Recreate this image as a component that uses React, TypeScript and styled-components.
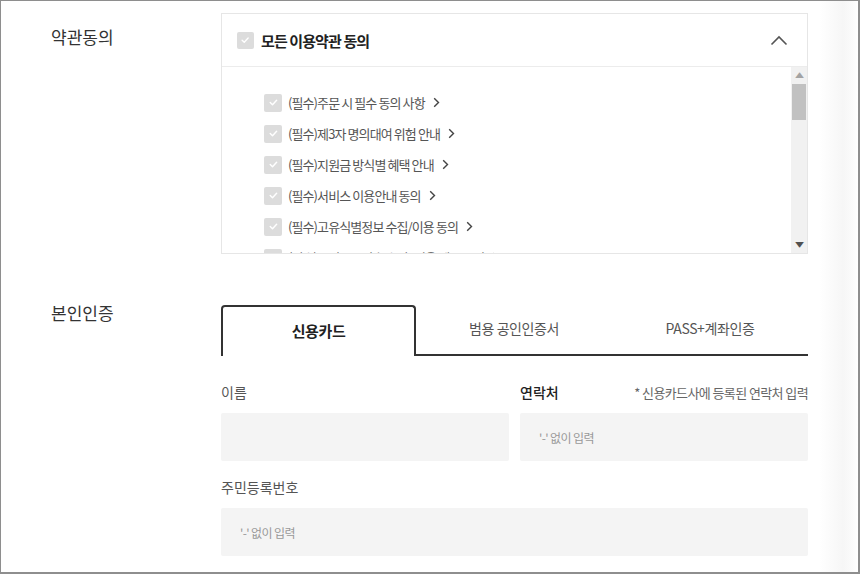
import styled, { createGlobalStyle } from "styled-components";

const GlobalStyle = createGlobalStyle`
    html, body {
        margin: 0;
        padding: 0;
        background: #ffffff;
    }
    * {
        box-sizing: border-box;
    }
    body {
        font-family: "Noto Sans CJK KR", "Noto Sans", sans-serif;
        color: #333;
    }
`

const terms = [
    "(필수)주문 시 필수 동의 사항",
    "(필수)제3자 명의대여 위험 안내",
    "(필수)지원금 방식별 혜택 안내",
    "(필수)서비스 이용안내 동의",
    "(필수)고유식별정보 수집/이용 동의",
    "(필수)주민등록번호 수집·이용 제공 동의",
]

const tabs = ["신용카드", "범용 공인인증서", "PASS+계좌인증"]

function Check({ size }: { size: number }) {
    return (
        <CheckBox $size={size}>
            <svg width={size * 0.6} height={size * 0.6} viewBox="0 0 12 12" fill="none">
                <path d="M2.5 6.2 L5 8.6 L9.6 3.6" stroke="#ffffff" strokeWidth="1.6" strokeLinecap="round" strokeLinejoin="round" />
            </svg>
        </CheckBox>
    )
}

export default function App() {
    return (
        <>
            <GlobalStyle />
            <Frame>
                <Section>
                    <SectionLabel $top={12}>약관동의</SectionLabel>
                    <TermsBox>
                        <TermsHeader>
                            <Check size={17} />
                            <AllTitle>모든 이용약관 동의</AllTitle>
                            <svg width="18" height="11" viewBox="0 0 18 11" fill="none" style={{ marginLeft: "auto" }}>
                                <path d="M1.5 9.5 L9 2 L16.5 9.5" stroke="#555" strokeWidth="1.6" />
                            </svg>
                        </TermsHeader>
                        <TermsBody>
                            <TermsList>
                                {terms.map((t) => (
                                    <TermRow key={t}>
                                        <Check size={18} />
                                        <TermText>{t}</TermText>
                                        <svg width="7" height="11" viewBox="0 0 7 11" fill="none">
                                            <path d="M1.2 1.2 L5.5 5.5 L1.2 9.8" stroke="#444" strokeWidth="1.4" />
                                        </svg>
                                    </TermRow>
                                ))}
                            </TermsList>
                            <ScrollTrack>
                                <ScrollArrow $dark={false}>▲</ScrollArrow>
                                <ScrollThumb />
                                <ScrollArrow $dark style={{ marginTop: "auto" }}>▼</ScrollArrow>
                            </ScrollTrack>
                        </TermsBody>
                    </TermsBox>
                </Section>

                <Section $gap={51}>
                    <SectionLabel $top={-4}>본인인증</SectionLabel>
                    <div>
                        <TabBar>
                            {tabs.map((t, i) => (
                                <Tab key={t} $active={i === 0}>{t}</Tab>
                            ))}
                        </TabBar>
                        <FieldGrid>
                            <Field>
                                <FieldHead>
                                    <FieldLabel>이름</FieldLabel>
                                </FieldHead>
                                <Input />
                            </Field>
                            <Field>
                                <FieldHead>
                                    <FieldLabel $strong>연락처</FieldLabel>
                                    <Note>* 신용카드사에 등록된 연락처 입력</Note>
                                </FieldHead>
                                <Input>'-' 없이 입력</Input>
                            </Field>
                            <Field $wide>
                                <FieldHead>
                                    <FieldLabel>주민등록번호</FieldLabel>
                                </FieldHead>
                                <Input>'-' 없이 입력</Input>
                            </Field>
                        </FieldGrid>
                    </div>
                </Section>
            </Frame>
        </>
    )
}

const Frame = styled.div`
    width: 860px;
    height: 574px;
    border: 1px solid #8e8e8e;
    border-right-width: 2px;
    border-bottom-width: 2px;
    padding-top: 12px;
    overflow: hidden;
    background: linear-gradient(to right, #fff 0, #fff 818px, #f6f6f6 842px, #fbfbfb 852px, #fff 857px);
`

const Section = styled.div<{ $gap?: number }>`
    display: grid;
    grid-template-columns: 220px 587px;
    margin-top: ${(p) => p.$gap ?? 0}px;
`

const SectionLabel = styled.div<{ $top: number }>`
    margin-top: ${(p) => p.$top}px;
    padding-left: 50px;
    font-size: 17px;
    line-height: 24px;
    color: #333;
`

const TermsBox = styled.div`
    border: 1px solid #e6e6e6;
    height: 241px;
    display: flex;
    flex-direction: column;
    background: #fff;
`

const TermsHeader = styled.div`
    height: 53px;
    flex-shrink: 0;
    display: flex;
    align-items: center;
    padding: 0 19px 0 15px;
    border-bottom: 1px solid #ececec;
`

const AllTitle = styled.span`
    margin-left: 7px;
    font-size: 15px;
    font-weight: 700;
    color: #222;
    letter-spacing: -0.9px;
`

const CheckBox = styled.span<{ $size: number }>`
    width: ${(p) => p.$size}px;
    height: ${(p) => p.$size}px;
    border-radius: 2px;
    background: #dcdcdc;
    display: inline-flex;
    align-items: center;
    justify-content: center;
    flex-shrink: 0;
`

const TermsBody = styled.div`
    flex: 1;
    display: flex;
    min-height: 0;
`

const TermsList = styled.div`
    flex: 1;
    overflow: hidden;
    padding: 20px 0 0 42px;
`

const TermRow = styled.div`
    height: 31px;
    display: flex;
    align-items: center;
`

const TermText = styled.span`
    margin: 0 8px 0 6px;
    font-size: 13px;
    color: #555;
    letter-spacing: -0.9px;
`

const ScrollTrack = styled.div`
    width: 16px;
    background: #f1f1f1;
    display: flex;
    flex-direction: column;
    align-items: center;
    padding: 3px 0 4px;
`

const ScrollArrow = styled.span<{ $dark: boolean }>`
    font-size: 7px;
    line-height: 10px;
    color: ${(p) => (p.$dark ? "#505050" : "#a3a3a3")};
    transform: scaleX(1.3);
`

const ScrollThumb = styled.div`
    width: 14px;
    height: 36px;
    margin-top: 4px;
    background: #c1c1c1;
`

const TabBar = styled.div`
    display: grid;
    grid-template-columns: 195px 196px 196px;
    height: 51px;
`

const Tab = styled.div<{ $active: boolean }>`
    display: flex;
    align-items: center;
    justify-content: center;
    font-size: ${(p) => (p.$active ? 15 : 14)}px;
    font-weight: ${(p) => (p.$active ? 700 : 400)};
    color: ${(p) => (p.$active ? "#222" : "#555")};
    letter-spacing: -0.4px;
    padding-bottom: 3px;
    ${(p) =>
        p.$active
            ? `border: 2px solid #333; border-bottom: none; border-radius: 4px 4px 0 0;`
            : `border-bottom: 2px solid #333;`}
`

const FieldGrid = styled.div`
    display: grid;
    grid-template-columns: 1fr 1fr;
    column-gap: 11px;
    row-gap: 15px;
    margin-top: 25px;
`

const Field = styled.div<{ $wide?: boolean }>`
    grid-column: ${(p) => (p.$wide ? "1 / span 2" : "auto")};
    display: flex;
    flex-direction: column;
`

const FieldHead = styled.div`
    display: flex;
    align-items: center;
    justify-content: space-between;
    height: 22px;
    margin-bottom: 10px;
`

const FieldLabel = styled.span<{ $strong?: boolean }>`
    font-size: 14px;
    color: ${(p) => (p.$strong ? "#222" : "#555")};
    font-weight: ${(p) => (p.$strong ? 500 : 400)};
`

const Note = styled.span`
    font-size: 13px;
    color: #666;
    letter-spacing: -0.6px;
`

const Input = styled.div`
    height: 48px;
    background: #f4f4f4;
    border-radius: 2px;
    display: flex;
    align-items: center;
    padding-left: 19px;
    font-size: 12px;
    color: #999;
    letter-spacing: -0.6px;
`
